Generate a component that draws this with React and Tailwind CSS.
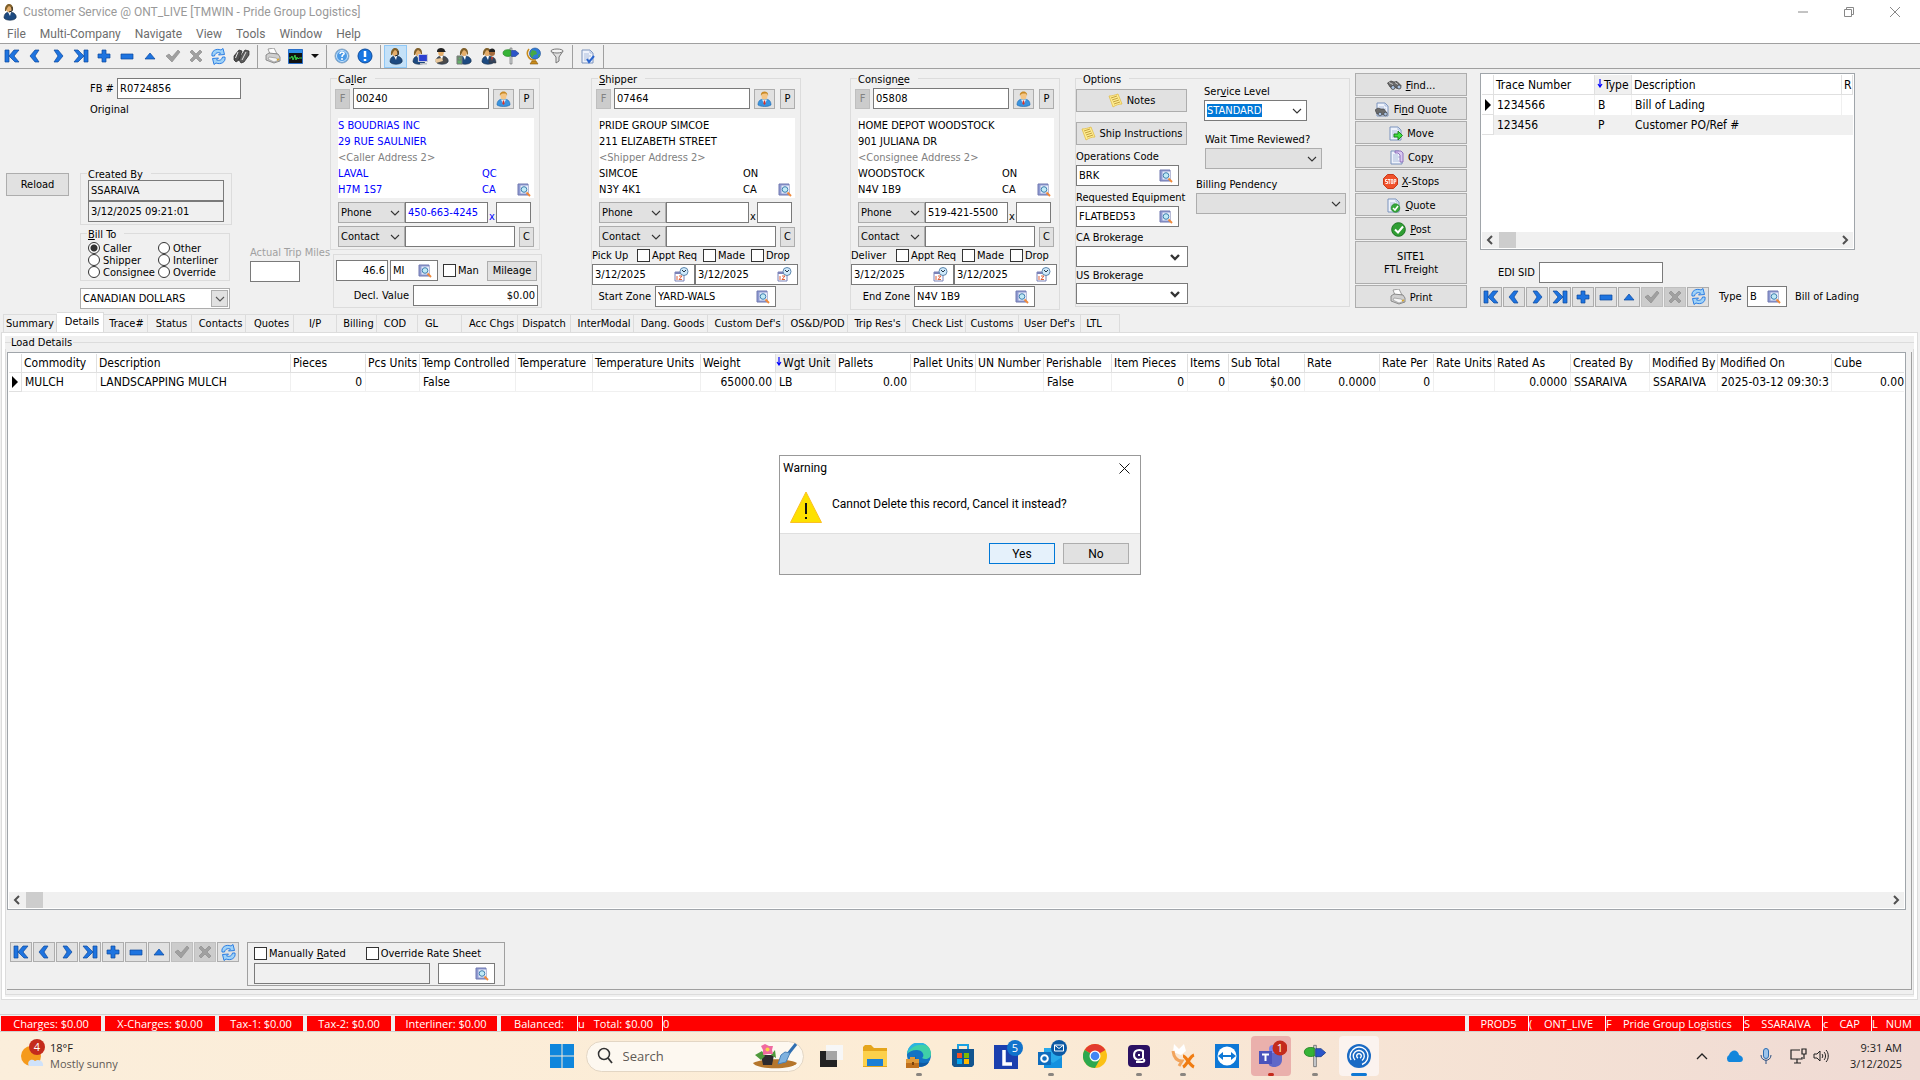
import React, { useState } from "react";

/* ---------- toolbar and record icons ---------- */

const BLUE = "#1e74e0";
const BLUE_EDGE = "#0b479c";

const navShapes = {
  first: "M1 2h4v12H1zM13 2h2L10 8l5 6h-4L5 8l5-6z",
  prev: "M8 2h4L8 8l4 6H8L3 8z",
  next: "M4 2h4l5 6-5 6H4l4-6z",
  last: "M1 2h4l6 6-6 6H1l5-6zM11 2h4v12h-4z",
  plus: "M6 2h4v4h4v4h-4v4H6v-4H2V6h4z",
  minus: "M2 6h12v5H2z",
  up: "M8 5l5 6H3z",
  check: "M1 8l3-2 3 3 6-7 2 2-8 10z",
  cross: "M2 4l2-2 4 4 4-4 2 2-4 4 4 4-2 2-4-4-4 4-2-2 4-4z",
};

function NavIcon({ name }) {
  if (name === "refresh") {
    return (
      <svg width="17" height="17" viewBox="0 0 17 17">
        <path d="M2 8C1 3 6 0 11 2l2-1.500 1.500 6-6 .500L10.500 5C8 4 5 5 4.500 8z" fill="#9fd2f8" stroke={BLUE} strokeWidth=".9" />
        <path d="M15 9c1 5-4 8-9 6l-2 1.500-1.500-6 6-.500L6.500 12c2.500 1 5.500 0 6-3z" fill="#9fd2f8" stroke={BLUE} strokeWidth=".9" />
      </svg>
    );
  }
  const gray = name === "check" || name === "cross";
  return (
    <svg width="16" height="16" viewBox="0 0 16 16">
      <path d={navShapes[name]} fill={gray ? "#a0a0a0" : BLUE} stroke={gray ? "#8e8e8e" : BLUE_EDGE} strokeWidth=".7" />
    </svg>
  );
}

function Person() {
  return (
    <svg width="15" height="17" viewBox="0 0 15 17">
      <path d="M1 15c0-4 2-6 6.500-6S14 11 14 15c-3 2-10 2-13 0z" fill="#3a94e0" stroke="#1c66ad" strokeWidth=".6" />
      <path d="M5 9.500l2.500 5 2.500-5z" fill="#e8f2fb" />
      <path d="M7 10.500h1l.700 3-1.200 1.500-1.200-1.500z" fill="#d8322a" />
      <ellipse cx="7.500" cy="6" rx="3" ry="3.600" fill="#f5c583" />
      <path d="M4 6C2.500 0 12.500 0 11 6c-.5-2-1-2.500-3-2.500S4.500 4 4 6z" fill="#c98a25" />
    </svg>
  );
}

function Agent({ variant }) {
  return (
    <svg width="18" height="18" viewBox="0 0 18 18">
      <path d="M3 15c0-4 2-6 6-6s7 3 6 6c-2 3-10 3-12 0z" fill={variant === "driver" ? "#4a4a4a" : "#1d4a80"} stroke="#152d4a" strokeWidth=".6" />
      <path d="M7 9l2 4 1-4z" fill="#fff" />
      <ellipse cx="8" cy="5.500" rx="2.800" ry="3.500" fill="#e5ae6b" />
      <path
        d={variant === "driver" ? "M4 4c0-4 8-4 8 0l1 1H4z" : "M4 8C3-1 13-1 12 7l-1 1c0-3-1-4-3-5-2 1-2 3-3 5z"}
        fill={variant === "driver" ? "#222" : "#80602a"}
      />
      {variant === "headset" && <path d="M11 4v4l-3 1" stroke="#222" fill="none" />}
      {variant === "computer" && (
        <g>
          <path d="M8.500 7.500h9v7h-9z" fill="#2b3fd0" stroke="#c5c9d8" strokeWidth="1.200" />
          <path d="M10 16h7v1.500h-7z" fill="#b9bcc6" />
        </g>
      )}
      {variant === "driver" && <path d="M2 12l7-1 1 3-7 2z" fill="#e8c79b" />}
      {variant === "phone" && <path d="M1 9h5v8H1zM2 10h3v3H2z" fill="#63b06a" stroke="#777" />}
      {variant === "group" && (
        <g>
          <circle cx="13" cy="6" r="3" fill="#a56b3c" />
          <path d="M10 5c0-5 7-4 6 0z" fill="#222" />
          <path d="M10 16c0-4 1-6 3-6s4 2 4 6z" fill="#33445c" stroke="#333" strokeWidth=".5" />
          <path d="M12 10h2l-1 4z" fill="#d0402e" />
        </g>
      )}
    </svg>
  );
}

function Lookup() {
  return (
    <svg width="14" height="14" viewBox="0 0 14 14" className="shrink-0">
      <path d="M1 1h10v11H1z" fill="#8f9bd2" stroke="#7078b0" />
      <path d="M3.500 2.500H11v8H3.500z" fill="#e7ecfa" />
      <circle cx="7" cy="6.500" r="2.800" fill="#bfeaf5" stroke="#3f7fae" />
      <path d="M9.500 9.500l3.500 3.500" stroke="#ef8a3b" strokeWidth="2" />
    </svg>
  );
}

function CalendarClock() {
  return (
    <svg width="15" height="15" viewBox="0 0 15 15" className="shrink-0">
      <path d="M1 5h9v9H1z" fill="#fff" stroke="#7b82b8" />
      <path d="M1 5h9v2H1z" fill="#7b82b8" />
      <path d="M3 9v4M5 9h3l-3 3.500h3" stroke="#e0603a" fill="none" />
      <circle cx="10" cy="4.500" r="4" fill="#cfe9fa" stroke="#5d86ad" />
      <path d="M8 3l2 2 2-2" stroke="#234" fill="none" />
    </svg>
  );
}

function Note() {
  return (
    <svg width="15" height="15" viewBox="0 0 15 15">
      <path d="M1 3c3 0 6-1 9-2l4 10c-3 0-6 1-9 3z" fill="#fdeb8f" stroke="#e2be4a" strokeWidth=".8" />
      <path d="M3 5l6-2M4 7l6-2M5 9l6-2M6 11l6-2" stroke="#b9922f" strokeWidth=".8" />
    </svg>
  );
}

function Binoculars() {
  return (
    <svg width="15" height="15" viewBox="0 0 15 15">
      <path d="M.500 5L4 3l3 1 3-.500 4 4-1 2.500-3 .500L7.500 9 6 10.500 3 9z" fill="#6a6a6a" stroke="#3a3a3a" strokeWidth=".7" />
      <path d="M2 4.500l4 2M8 4.500l3 2" stroke="#ddd" strokeWidth=".8" />
      <circle cx="6" cy="9.500" r="2" fill="#a9c2e2" stroke="#444" strokeWidth=".8" />
      <circle cx="12" cy="9" r="2" fill="#a9c2e2" stroke="#444" strokeWidth=".8" />
    </svg>
  );
}

function BinocularsTall() {
  return (
    <svg width="17" height="16" viewBox="0 0 17 16">
      <path d="M1 8l5-6 3 1-3 9-3 2-2-2z" fill="#4d4d4d" stroke="#222" strokeWidth=".7" />
      <path d="M8 8l4-6 4 1v4l-5 7-3 1-2-3z" fill="#5e5e5e" stroke="#222" strokeWidth=".7" />
      <path d="M5 4l-2.500 6M13 4l-4 8" stroke="#e4e4e4" />
    </svg>
  );
}

function Doc({ kind }) {
  return (
    <svg width="15" height="15" viewBox="0 0 15 15">
      <path d="M2 1h8l3 3v10H2z" fill="#eef2fb" stroke="#7b93bd" />
      <path d="M10 1v3h3M4 5h5M4 7h7M4 9h5M4 11h6" fill="none" stroke="#9db1d6" strokeWidth=".8" />
      {kind === "move" && <path d="M6 8h4V5l4.500 4.500L10 14v-3H6z" fill="#3fdf3f" stroke="#157a15" strokeWidth=".9" />}
      {kind === "find" && (
        <g>
          <path d="M0 8l3-2 3 1 3 0 3 4-2 2-8-1z" fill="#6a6a6a" stroke="#3a3a3a" strokeWidth=".6" />
          <circle cx="5" cy="12" r="1.800" fill="#a9c2e2" stroke="#444" strokeWidth=".7" />
          <circle cx="10.500" cy="12" r="1.800" fill="#a9c2e2" stroke="#444" strokeWidth=".7" />
        </g>
      )}
      {kind === "copy" && <path d="M6 1h6l2 2v9h-3V5L9 3H6z" fill="#d9c9f0" stroke="#7c5cb0" strokeWidth=".8" />}
      {kind === "quote" && (
        <g>
          <circle cx="9.500" cy="10" r="4.300" fill="#36a83a" stroke="#187a1e" strokeWidth=".6" />
          <path d="M7 10l2 2 3-4" stroke="#fff" strokeWidth="1.500" fill="none" />
        </g>
      )}
      {kind === "tick" && <path d="M7 10l2 3 5-6" stroke="#2b66cf" strokeWidth="2" fill="none" />}
    </svg>
  );
}

function Stop() {
  return (
    <svg width="15" height="15" viewBox="0 0 15 15">
      <path d="M4.500.5h6l4 4v6l-4 4h-6l-4-4v-6z" fill="#f0512a" stroke="#c9391a" />
      <path d="M4.500 5.500H2.500v2h2v2h-2M5 5.500h2.500M6.200 5.500v4.500M8.200 5.500h1.600v4H8.200zM11.200 10V5.500h1.600v2.200h-1.600" stroke="#fff" fill="none" strokeWidth=".9" />
    </svg>
  );
}

function GreenCheck() {
  return (
    <svg width="15" height="15" viewBox="0 0 15 15">
      <circle cx="7.500" cy="7.500" r="6.800" fill="#2f9e33" stroke="#1a7420" />
      <path d="M4 7.500l3 3L12 4.500" stroke="#fff" strokeWidth="2" fill="none" />
    </svg>
  );
}

function Printer() {
  return (
    <svg width="16" height="16" viewBox="0 0 16 16">
      <path d="M3 1l6-1 3 6H5z" fill="#fdfdfd" stroke="#8a8a8a" strokeWidth=".8" />
      <path d="M1 7l3-2 9 1 2 3v4l-6 2-8-3z" fill="#cfcfcf" stroke="#777" strokeWidth=".8" />
      <path d="M4 9l7 1 3 2-5 2-6-3z" fill="#f6f6f6" stroke="#888" strokeWidth=".6" />
      <path d="M12 12l2-1" stroke="#dca92c" strokeWidth="1.500" />
    </svg>
  );
}

function Signpost({ size = 18 }) {
  return (
    <svg width={size} height={size} viewBox="0 0 18 18">
      <path d="M8 1h2v16H8z" fill="#d0d4d8" stroke="#666" strokeWidth=".6" />
      <path d="M8.500 3C5 2 1 3 1 6s4 4 7.500 3z" fill="#36b336" stroke="#1a7a1a" strokeWidth=".6" />
      <path d="M9.500 3.500h4l3.500 3-3.500 3h-4z" fill="#2b55c9" stroke="#173c86" strokeWidth=".6" />
    </svg>
  );
}

function Globe() {
  return (
    <svg width="18" height="18" viewBox="0 0 18 18">
      <path d="M5 17h8l-2-3H7z" fill="#c88a1b" stroke="#85590d" strokeWidth=".6" />
      <path d="M4 2C0 7 4 14 11 13" fill="none" stroke="#c88a1b" strokeWidth="1.500" />
      <circle cx="10" cy="6.500" r="5.500" fill="#2f7bd6" stroke="#1a4c90" strokeWidth=".6" />
      <path d="M7 3l4 1 1 3-3 1-2 3-2-4zM13 8l2-1-1 4z" fill="#46a846" />
    </svg>
  );
}

function Chevron({ bold = false, gray = false }) {
  return (
    <svg width="12" height="8" viewBox="0 0 12 8" className="pointer-events-none shrink-0">
      <path d="M2 2l4 4 4-4" fill="none" stroke={gray ? "#555" : "#333"} strokeWidth={bold ? 2.4 : 1.1} />
    </svg>
  );
}

/* ---------- form controls ---------- */

function Field({ label, id, value = "", className = "", inputClass = "", readOnly, icon, type = "text" }) {
  return (
    <div className={`flex h-[21px] shrink-0 items-center border border-[#7a7a7a] ${readOnly ? "bg-[#f0f0f0]" : "bg-white"} ${className}`}>
      <input
        id={id}
        aria-label={label}
        type={type}
        readOnly={readOnly}
        defaultValue={value}
        className={`h-full w-full min-w-0 flex-1 bg-transparent px-[2px] outline-none ${inputClass}`}
      />
      {icon && <span className="mr-[5px] flex">{icon}</span>}
    </div>
  );
}

function Combo({ label, id, value = "", className = "", tone = "gray", bold, selected }) {
  const tones = {
    gray: "bg-[#e1e1e1] border-[#adadad]",
    white: "bg-white border-[#7a7a7a]",
    currency: "bg-white border-[#adadad]",
  };
  return (
    <div className={`relative flex h-[21px] shrink-0 items-center border ${tones[tone]} ${className}`}>
      <select
        id={id}
        aria-label={label}
        className={`h-[13px] appearance-none outline-none ${selected ? "bg-[#0078d7] text-white" : "w-full bg-transparent px-[2px]"}`}
      >
        <option>{value}</option>
      </select>
      {tone === "currency" ? (
        <span className="pointer-events-none absolute right-px flex h-[17px] w-[17px] items-center justify-center border border-[#adadad] bg-[#e1e1e1]">
          <Chevron gray />
        </span>
      ) : (
        <span className={`pointer-events-none absolute flex ${bold ? "right-[6px]" : "right-[3px]"}`}>
          <Chevron bold={bold} />
        </span>
      )}
    </div>
  );
}

function Check({ children, className = "" }) {
  return (
    <label className={`flex items-center gap-[2px] whitespace-nowrap ${className}`}>
      <input type="checkbox" className="h-[13px] w-[13px] shrink-0 appearance-none border border-[#333] bg-white checked:bg-[#333]" />
      <span>{children}</span>
    </label>
  );
}

function Button({ children, className = "", disabled, ...rest }) {
  return (
    <button
      type="button"
      disabled={disabled}
      className={`flex shrink-0 items-center justify-center border ${
        disabled ? "border-[#bfbfbf] bg-[#cccccc] text-[#838383]" : "border-[#adadad] bg-[#e1e1e1]"
      } ${className}`}
      {...rest}
    >
      {children}
    </button>
  );
}

function Group({ title, children, className = "" }) {
  return (
    <fieldset className={`border border-[#dcdcdc] ${className}`}>
      <legend className="ml-[6px] h-[13px] pr-2 pl-px leading-[15px]">{title}</legend>
      {children}
    </fieldset>
  );
}

const navNames = ["first", "prev", "next", "last", "plus", "minus", "up", "check", "cross", "refresh"];

function Navigator() {
  return (
    <div className="flex shrink-0 gap-px">
      {navNames.map((n) => (
        <Button key={n} aria-label={n} disabled={n === "check" || n === "cross"} className="h-5 w-[22px]">
          <NavIcon name={n} />
        </Button>
      ))}
    </div>
  );
}

/* ---------- header form ---------- */

function Party({ title, name, code, lines, city, region, postal, phone = "", blue, stop }) {
  const ink = blue ? "text-[#0000ff]" : "";
  return (
    <Group title={title} className="w-[210px] pb-[2px]">
      <div className="flex items-center pt-[3px] pl-1">
        <Button disabled aria-label={`${name} filter`} className="h-5 w-[15px]">F</Button>
        <Field label={`${name} code`} value={code} className="ml-[3px] w-[136px]" />
        <Button aria-label={`${name} profile`} className="ml-1 h-5 w-[21px]"><Person /></Button>
        <Button className="ml-[5px] h-5 w-[15px]">P</Button>
      </div>
      <div className={`mt-[9px] ml-[7px] w-[196px] bg-white leading-4 whitespace-nowrap ${ink}`}>
        <p>{lines[0]}</p>
        <p>{lines[1]}</p>
        <p className="text-[#808080]">&lt;{name} Address 2&gt;</p>
        <p className="flex"><span className="w-36">{city}</span><span>{region}</span></p>
        <p className="flex items-center">
          <span className="w-36">{postal}</span>
          <span className="w-[35px]">CA</span>
          <Lookup />
        </p>
      </div>
      <div className="mt-1 ml-[7px] flex">
        <Combo label={`${name} phone type`} value="Phone" className="w-[67px]" />
        <Field label={`${name} phone`} value={phone} className="w-[83px]" inputClass={ink} />
        <label htmlFor={`${name}-ext`} className={`w-2 self-end text-center ${ink}`}>x</label>
        <Field id={`${name}-ext`} label="Extension" className="w-[35px]" />
      </div>
      <div className="mt-[3px] ml-[7px] flex items-center">
        <Combo label={`${name} contact type`} value="Contact" className="w-[67px]" />
        <Field label={`${name} contact`} className="w-[110px]" />
        <Button className="ml-1 h-5 w-[15px]">C</Button>
      </div>
      {stop && (
        <>
          <div className="mt-[2px] flex h-[13px] items-center">
            <span className="w-[45px]">{stop.label}</span>
            <Check className="w-[66px]">Appt Req</Check>
            <Check className="w-12">Made</Check>
            <Check>Drop</Check>
          </div>
          <div className="mt-[2px] flex">
            <Field label={`${stop.label} from`} value="3/12/2025" className="w-[103px]" icon={<CalendarClock />} />
            <Field label={`${stop.label} to`} value="3/12/2025" className="w-[103px]" icon={<CalendarClock />} />
          </div>
          <div className="mt-px flex items-center">
            <label htmlFor={`${name}-zone`} className="w-[63px] pr-1 text-right whitespace-nowrap">{stop.zoneLabel}</label>
            <Field id={`${name}-zone`} label={stop.zoneLabel} value={stop.zone} className="w-[121px]" icon={<Lookup />} />
          </div>
        </>
      )}
    </Group>
  );
}

function BillColumn() {
  const options = ["Caller", "Other", "Shipper", "Interliner", "Consignee", "Override"];
  return (
    <div className="w-[330px] shrink-0 pt-[6px]">
      <div className="flex items-center pl-[90px]">
        <label htmlFor="fb" className="w-[27px]">FB #</label>
        <Field id="fb" label="FB #" value="R0724856" className="w-[124px]" />
      </div>
      <p className="mt-1 pl-[90px]">Original</p>
      <div className="mt-[51px] flex items-start">
        <Button className="mt-[6px] ml-[6px] h-[23px] w-[63px]">Reload</Button>
        <div className="ml-[11px] w-[150px]">
          <Group title="Created By" className="pb-[2px]">
            <div className="px-[7px]">
              <Field label="Created by user" value="SSARAIVA" readOnly className="w-[136px]" />
              <Field label="Created on" value="3/12/2025 09:21:01" readOnly className="w-[136px]" />
            </div>
          </Group>
          <Group title={<><u>B</u>ill To</>} className="mt-[2px] pb-[2px]">
            <div className="grid grid-cols-[70px_70px] pt-[2px] pl-[7px]">
              {options.map((o) => (
                <label key={o} className="flex h-3 items-center gap-[3px] whitespace-nowrap">
                  <input
                    type="radio"
                    name="billto"
                    defaultChecked={o === "Caller"}
                    className="h-3 w-3 shrink-0 appearance-none rounded-full border border-[#333] bg-white checked:bg-[radial-gradient(circle,#333_0_3px,white_4px)]"
                  />
                  {o}
                </label>
              ))}
            </div>
          </Group>
          <Combo label="Currency" value="CANADIAN DOLLARS" tone="currency" className="mt-[7px] w-[150px]" />
        </div>
        <div className="mt-[79px] ml-5 whitespace-nowrap">
          <label htmlFor="trip" className="block text-[#a0a0a0]">Actual Trip Miles</label>
          <Field id="trip" label="Actual Trip Miles" className="mt-[2px] w-[50px]" />
        </div>
      </div>
    </div>
  );
}

function CallerColumn() {
  return (
    <div className="w-[212px] shrink-0">
      <Party
        title={<>Ca<u>l</u>ler</>}
        name="Caller"
        code="00240"
        lines={["S BOUDRIAS INC", "29 RUE SAULNIER"]}
        city="LAVAL"
        region="QC"
        postal="H7M 1S7"
        phone="450-663-4245"
        blue
      />
      <div className="mt-1 ml-[3px] border border-[#dcdcdc] px-[2px] pt-[5px] pb-px">
        <div className="flex items-center">
          <Field label="Miles" value="46.6" className="w-[52px]" inputClass="text-right" />
          <Field label="Distance unit" value="MI" className="ml-[2px] w-12" icon={<Lookup />} />
          <Check className="ml-[5px] w-11">Man</Check>
          <Button className="h-5 w-[50px]">Mileage</Button>
        </div>
        <div className="mt-1 flex items-center">
          <label htmlFor="decl" className="w-[77px] pr-1 text-right">Decl. Value</label>
          <Field id="decl" label="Decl. Value" value="$0.00" className="w-[125px]" inputClass="text-right" />
        </div>
      </div>
    </div>
  );
}

function Options() {
  return (
    <Group title="Options" className="w-[275px] shrink-0 pb-[2px]">
      <div className="flex whitespace-nowrap">
        <div className="w-[120px] pt-1">
          <Button className="h-[23px] w-[111px] gap-1"><Note />Notes</Button>
          <Button className="mt-[10px] h-[23px] w-[111px] gap-1"><Note />Ship Instructions</Button>
          <label htmlFor="ops" className="mt-[5px] block">Operations Code</label>
          <Field id="ops" label="Operations Code" value="BRK" className="mt-[2px] w-[103px]" icon={<Lookup />} />
          <label htmlFor="equip" className="mt-[5px] block">Requested Equipment</label>
          <Field id="equip" label="Requested Equipment" value="FLATBED53" className="mt-[2px] w-[103px]" icon={<Lookup />} />
          <label htmlFor="cabrk" className="mt-1 block">CA Brokerage</label>
          <Combo id="cabrk" label="CA Brokerage" tone="white" bold className="mt-[2px] w-[112px]" />
          <label htmlFor="usbrk" className="mt-[2px] block">US Brokerage</label>
          <Combo id="usbrk" label="US Brokerage" tone="white" bold className="mt-px w-[112px]" />
        </div>
        <div>
          <label htmlFor="svc" className="ml-2 block">Ser<u>v</u>ice Level</label>
          <Combo id="svc" label="Service Level" value="STANDARD" tone="white" selected className="mt-[2px] ml-2 w-[103px] pl-[2px]" />
          <label htmlFor="wait" className="mt-3 ml-[9px] block">Wait Time Reviewed?</label>
          <Combo id="wait" label="Wait Time Reviewed?" className="mt-[2px] ml-[9px] w-[117px]" />
          <label htmlFor="pend" className="mt-[9px] block">Billing Pendency</label>
          <Combo id="pend" label="Billing Pendency" className="mt-[2px] w-[150px]" />
        </div>
      </div>
    </Group>
  );
}

function ActionButtons() {
  const actions = [
    [<Binoculars />, <><u>F</u>ind...</>],
    [<Doc kind="find" />, <>Fi<u>n</u>d Quote</>],
    [<Doc kind="move" />, "Move"],
    [<Doc kind="copy" />, <>Cop<u>y</u></>],
    [<Stop />, <><u>X</u>-Stops</>],
    [<Doc kind="quote" />, <><u>Q</u>uote</>],
    [<GreenCheck />, <><u>P</u>ost</>],
  ];
  return (
    <div className="ml-[5px] flex w-28 shrink-0 flex-col gap-px pt-px">
      {actions.map(([icon, text], i) => (
        <Button key={i} className="h-[23px] gap-1 pt-px">{icon}<span>{text}</span></Button>
      ))}
      <Button className="h-[43px] pt-px">SITE1<br />FTL Freight</Button>
      <Button className="h-[23px] gap-1 pt-px"><Printer />Print</Button>
    </div>
  );
}

function ScrollBar() {
  return (
    <div className="flex h-4 shrink-0 items-center bg-[#f0f0f0]">
      <svg width="17" height="10" viewBox="0 0 17 10"><path d="M10 1L6 5l4 4" fill="none" stroke="#505050" strokeWidth="2" /></svg>
      <span className="h-4 w-[17px] bg-[#cdcdcd]" />
      <span className="flex-1" />
      <svg width="17" height="10" viewBox="0 0 17 10"><path d="M7 1l4 4-4 4" fill="none" stroke="#505050" strokeWidth="2" /></svg>
    </div>
  );
}

function SortArrow() {
  return (
    <svg width="6" height="9" viewBox="0 0 6 9" className="mr-px mb-1 inline-block">
      <path d="M3 0v8M1 5l2 3 2-3" fill="none" stroke="#0000ff" strokeWidth="1.200" />
    </svg>
  );
}

function RowMarker() {
  return (
    <svg width="7" height="12" viewBox="0 0 7 12" className="ml-[3px]"><path d="M0 0l6 6-6 6z" fill="#000" /></svg>
  );
}

function TracePanel() {
  const th = "h-5 border-r border-b border-[#e0e0e0] px-[2px] text-left font-normal";
  const td = "h-5 border-r border-[#f0f0f0] px-[3px]";
  return (
    <div className="ml-[13px] w-[375px] shrink-0 pt-px">
      <div className="flex h-[177px] flex-col border border-[#a0a5aa] bg-white p-px">
        <div className="flex-1 overflow-hidden">
          <table className="w-full table-fixed border-separate border-spacing-0 text-xs whitespace-nowrap">
            <colgroup>
              <col className="w-3" /><col className="w-[101px]" /><col className="w-[37px]" /><col className="w-[210px]" /><col />
            </colgroup>
            <thead>
              <tr>
                <th className={th} />
                <th className={th}>Trace Number</th>
                <th className={`${th} bg-[#f0f0f0]`}><SortArrow />Type</th>
                <th className={th}>Description</th>
                <th className={th}>R</th>
              </tr>
            </thead>
            <tbody>
              <tr>
                <td className="border-r border-b border-[#e0e0e0]"><RowMarker /></td>
                <td className={td}>1234566</td><td className={td}>B</td><td className={td}>Bill of Lading</td><td />
              </tr>
              <tr className="bg-[#f0f0f0]">
                <td className="border-r border-b border-[#e0e0e0] bg-white" />
                <td className={td}>123456</td><td className={td}>P</td><td className={td}>Customer PO/Ref #</td><td />
              </tr>
            </tbody>
          </table>
        </div>
        <ScrollBar />
      </div>
      <div className="mt-3 flex items-center">
        <label htmlFor="edi" className="w-[59px] pl-[18px] whitespace-nowrap">EDI SID</label>
        <Field id="edi" label="EDI SID" className="w-[124px]" />
      </div>
      <div className="mt-[3px] flex items-center whitespace-nowrap">
        <Navigator />
        <label htmlFor="ttype" className="ml-[10px] w-7 shrink-0">Type</label>
        <Field id="ttype" label="Type" value="B" className="w-10" icon={<Lookup />} />
        <span className="ml-2">Bill of Lading</span>
      </div>
    </div>
  );
}

/* ---------- window chrome ---------- */

function Sep() {
  return <span className="mr-[3px] ml-1 h-[23px] w-px shrink-0 bg-[#a0a0a0]" />;
}

function ToolButton({ label, children, active }) {
  return (
    <button type="button" aria-label={label} className={`flex h-[23px] w-[23px] shrink-0 items-center justify-center ${active ? "border border-[#90c8f6] bg-[#c4e1f8]" : ""}`}>
      {children}
    </button>
  );
}

function TitleBar() {
  const menus = ["File", "Multi-Company", "Navigate", "View", "Tools", "Window", "Help"];
  return (
    <header className="bg-white font-[Roboto,'Noto_Sans',sans-serif] text-xs">
      <div className="flex h-6 items-center pl-px text-[#999999]">
        <Agent variant="headset" />
        <h1 className="ml-1 flex-1">Customer Service @ ONT_LIVE [TMWIN - Pride Group Logistics]</h1>
        <button type="button" aria-label="Minimize" className="flex w-[46px] justify-center"><svg width="10" height="10"><path d="M0 5h10" stroke="#888" /></svg></button>
        <button type="button" aria-label="Restore" className="flex w-[46px] justify-center"><svg width="10" height="10"><path d="M.5 2.500h7v7h-7zM2.500 2.500v-2h7v7h-2" stroke="#888" fill="none" /></svg></button>
        <button type="button" aria-label="Close" className="mr-[2px] flex w-[46px] justify-center"><svg width="10" height="10"><path d="M0 0l10 10M10 0L0 10" stroke="#888" /></svg></button>
      </div>
      <nav className="flex h-[19px] items-center gap-[14px] pl-[7px] text-[#6d6d6d]">
        {menus.map((m) => <button type="button" key={m}>{m}</button>)}
      </nav>
    </header>
  );
}

function Toolbar() {
  return (
    <div className="flex h-[26px] items-center border-t border-b border-[#a0a0a0]">
      {navNames.map((n) => <ToolButton key={n} label={n}><NavIcon name={n} /></ToolButton>)}
      <ToolButton label="Find"><BinocularsTall /></ToolButton>
      <Sep />
      <ToolButton label="Print"><Printer /></ToolButton>
      <ToolButton label="Monitor">
        <svg width="15" height="15" viewBox="0 0 15 15">
          <path d="M.5.500h14v14H.5z" fill="#111" stroke="#2a6fc9" />
          <path d="M1 1h13v3H1z" fill="#2f8fe8" />
          <path d="M1 9h2l1-2 1 4 2-5 1 5 1-3 1 2 1-1h3" fill="none" stroke="#35d04a" />
        </svg>
      </ToolButton>
      <svg width="15" height="8" viewBox="0 0 15 8"><path d="M4 2h8L8 6z" fill="#111" /></svg>
      <Sep />
      <ToolButton label="Help">
        <svg width="16" height="16" viewBox="0 0 16 16">
          <circle cx="8" cy="8" r="7" fill="#4b9ae6" stroke="#8fa8c0" />
          <circle cx="8" cy="8" r="5.500" fill="none" stroke="#cfe6fa" />
          <path d="M6 6c0-3 5-2 4 0-1 1-2 1-2 3M8 10v2" fill="none" stroke="#fff" strokeWidth="1.500" />
        </svg>
      </ToolButton>
      <ToolButton label="Alert">
        <svg width="16" height="16" viewBox="0 0 16 16">
          <circle cx="8" cy="8" r="7" fill="#1876e2" stroke="#0c4b9c" />
          <path d="M8 3v6M8 11v2" stroke="#fff" strokeWidth="2.500" />
        </svg>
      </ToolButton>
      <Sep />
      <ToolButton label="Customer service" active><Agent variant="headset" /></ToolButton>
      <ToolButton label="Dispatch"><Agent variant="computer" /></ToolButton>
      <ToolButton label="Drivers"><Agent variant="driver" /></ToolButton>
      <ToolButton label="Calls"><Agent variant="phone" /></ToolButton>
      <ToolButton label="Clients"><Agent variant="group" /></ToolButton>
      <ToolButton label="Routes"><Signpost /></ToolButton>
      <ToolButton label="Map"><Globe /></ToolButton>
      <ToolButton label="Filter">
        <svg width="16" height="16" viewBox="0 0 16 16">
          <path d="M2 3l5 6v6l3-2V9l4-6z" fill="#e0e0e0" stroke="#777" />
          <ellipse cx="8" cy="3" rx="6" ry="2" fill="#f4f4f4" stroke="#777" />
        </svg>
      </ToolButton>
      <Sep />
      <ToolButton label="Report"><Doc kind="tick" /></ToolButton>
      <Sep />
    </div>
  );
}

/* ---------- details tab ---------- */

const tabs = [
  ["Summary", "w-[54px]"], ["Details", "w-[47px] pl-1"], ["Trace#", "w-[44px] pl-[2px]"], ["Status", "w-[44px] pl-1"],
  ["Contacts", "w-[54px] pl-1"], ["Quotes", "w-[48px] pl-1"], ["I/P", "w-[43px]"], ["Billing", "w-[40px] pl-1"],
  ["COD", "w-[41px] pr-1"], ["GL", "w-[44px] pr-4"], ["Acc Chgs", "w-[56px] pl-1"], ["Dispatch", "w-[53px]"],
  ["InterModal", "w-[63px] pl-1"], ["Dang. Goods", "w-[74px] pl-1"], ["Custom Def's", "w-[76px] pl-1"],
  ["OS&D/POD", "w-[64px] pl-1"], ["Trip Res's", "w-[58px] pl-[2px]"], ["Check List", "w-[60px] pl-1"],
  ["Customs", "w-[53px]"], ["User Def's", "w-[62px]"], ["LTL", "w-[39px] pr-3"],
];

function TabStrip() {
  const [active, setActive] = useState("Details");
  return (
    <div role="tablist" className="flex h-5 shrink-0 items-end pl-[3px] whitespace-nowrap">
      {tabs.map(([name, width]) => (
        <button
          key={name}
          type="button"
          role="tab"
          aria-selected={active === name}
          onClick={() => setActive(name)}
          className={`flex shrink-0 justify-center border-t border-r border-[#dcdcdc] pt-[2px] first:border-l ${width} ${
            active === name ? "h-5 bg-white" : "h-[18px]"
          }`}
        >
          {name}
        </button>
      ))}
    </div>
  );
}

const columns = [
  ["Commodity", "w-[75px]", "MULCH"],
  ["Description", "w-[194px]", "LANDSCAPPING MULCH"],
  ["Pieces", "w-[75px]", "0", "right"],
  ["Pcs Units", "w-[54px]", ""],
  ["Temp Controlled", "w-[96px]", "False"],
  ["Temperature", "w-[77px]", ""],
  ["Temperature Units", "w-[108px]", ""],
  ["Weight", "w-[75px]", "65000.00", "right"],
  ["Wgt Unit", "w-[60px]", "LB"],
  ["Pallets", "w-[75px]", "0.00", "right"],
  ["Pallet Units", "w-[65px]", ""],
  ["UN Number", "w-[68px]", ""],
  ["Perishable", "w-[68px]", "False"],
  ["Item Pieces", "w-[76px]", "0", "right"],
  ["Items", "w-[41px]", "0", "right"],
  ["Sub Total", "w-[76px]", "$0.00", "right"],
  ["Rate", "w-[75px]", "0.0000", "right"],
  ["Rate Per", "w-[54px]", "0", "right"],
  ["Rate Units", "w-[61px]", ""],
  ["Rated As", "w-[76px]", "0.0000", "right"],
  ["Created By", "w-[79px]", "SSARAIVA"],
  ["Modified By", "w-[68px]", "SSARAIVA"],
  ["Modified On", "w-[114px]", "2025-03-12 09:30:3"],
  ["Cube", "w-[76px]", "0.00", "right"],
];

function LoadGrid() {
  return (
    <div className="mr-[5px] flex flex-1 flex-col border border-[#a0a5aa] bg-white p-px">
      <div className="flex-1 overflow-hidden">
        <table className="w-full table-fixed border-separate border-spacing-0 text-xs whitespace-nowrap">
          <colgroup>
            <col className="w-[13px]" />
            {columns.map(([name, width]) => <col key={name} className={width} />)}
          </colgroup>
          <thead>
            <tr>
              <th className="h-[19px] border-r border-b border-[#e0e0e0]" />
              {columns.map(([name]) => (
                <th key={name} className={`border-r border-b border-[#e0e0e0] text-left font-normal ${name === "Wgt Unit" ? "bg-[#f0f0f0]" : "pl-[2px]"}`}>
                  {name === "Wgt Unit" && <SortArrow />}
                  {name}
                </th>
              ))}
            </tr>
          </thead>
          <tbody>
            <tr>
              <td className="h-[19px] border-r border-b border-[#e0e0e0]"><RowMarker /></td>
              {columns.map(([name, , value, align]) => (
                <td key={name} className={`border-r border-b border-[#f0f0f0] px-[3px] ${align === "right" ? "text-right" : ""}`}>{value}</td>
              ))}
            </tr>
          </tbody>
        </table>
      </div>
      <ScrollBar />
    </div>
  );
}

function DetailsPanel() {
  return (
    <main className="mr-[2px] ml-px flex flex-1 flex-col border border-[#dcdcdc] bg-white px-[3px] pt-[3px] pb-[2px]">
      <div className="flex flex-1 flex-col bg-[#f0f0f0] pb-[2px]">
        <div className="flex h-[13px] shrink-0 items-center">
          <span className="h-px w-[6px] bg-[#dcdcdc]" />
          <h2 className="leading-[15px]">Load Details</h2>
          <span className="ml-px h-px flex-1 bg-[#dcdcdc]" />
        </div>
        <div className="flex flex-1 flex-col border-r border-b border-l border-[#dcdcdc] pt-[3px] pr-px pb-1 pl-px">
          <div className="flex flex-1 flex-col border-r border-b border-[#a0a0a0]">
            <LoadGrid />
            <div className="flex h-[79px] shrink-0 items-start pt-8 pl-[3px]">
              <Navigator />
              <div className="ml-2 border border-[#a0a0a0] px-[6px] pt-1 pb-px">
                <div className="flex">
                  <Check className="mr-5">Manually <u>R</u>ated</Check>
                  <Check>Override Rate Sheet</Check>
                </div>
                <div className="mt-[3px] flex">
                  <Field label="Rate sheet name" readOnly className="w-[176px]" />
                  <Field label="Rate sheet" className="mr-[3px] ml-2 w-[57px]" icon={<Lookup />} />
                </div>
              </div>
            </div>
          </div>
        </div>
      </div>
    </main>
  );
}

function WarningDialog() {
  return (
    <div role="dialog" aria-labelledby="warn-title" className="absolute top-[455px] left-1/2 w-[362px] -translate-x-1/2 border border-[#999] bg-white font-[Roboto,'Noto_Sans',sans-serif] text-xs leading-4">
      <div className="flex h-6 items-center justify-between pr-[10px] pl-[3px]">
        <h2 id="warn-title">Warning</h2>
        <button type="button" aria-label="Close dialog">
          <svg width="11" height="11"><path d="M.5.500l10 10M10.500.500l-10 10" stroke="#111" /></svg>
        </button>
      </div>
      <div className="flex h-[53px] pt-[11px] pl-[10px]">
        <svg width="32" height="32" viewBox="0 0 32 32">
          <path d="M16 1l15.500 30.500H.5z" fill="#fde100" stroke="#fbbf24" />
          <path d="M16 12v11M16 26v2" stroke="#111" strokeWidth="2" />
        </svg>
        <p className="mt-[5px] ml-[10px]">Cannot Delete this record, Cancel it instead?</p>
      </div>
      <div className="flex h-[41px] items-start justify-end gap-2 border-t border-[#dfdfdf] bg-[#f0f0f0] pt-[9px] pr-[11px]">
        <button type="button" className="h-[21px] w-[66px] border border-[#0078d7] bg-[#e5f1fb]">Yes</button>
        <button type="button" className="h-[21px] w-[66px] border border-[#adadad] bg-[#e1e1e1]">No</button>
      </div>
    </div>
  );
}

/* ---------- bottom bars ---------- */

function StatusCell({ width, mark, children }) {
  return (
    <span className={`flex h-full shrink-0 bg-[#ff0000] ${mark ? "border-l border-white" : ""} ${width}`}>
      {mark && <span>{mark}</span>}
      <span className="flex-1 text-center">{children}</span>
    </span>
  );
}

function StatusBar() {
  return (
    <div className="flex h-[18px] shrink-0 gap-1 border-t border-b border-[#d0d0d0] pt-px pl-px font-['Open_Sans','Noto_Sans',sans-serif] text-[11px] leading-[15px] whitespace-nowrap text-white">
      <StatusCell width="w-[100px]">Charges: $0.00</StatusCell>
      <StatusCell width="w-[110px]">X-Charges: $0.00</StatusCell>
      <StatusCell width="w-[84px]">Tax-1: $0.00</StatusCell>
      <StatusCell width="w-[84px]">Tax-2: $0.00</StatusCell>
      <StatusCell width="w-[102px]">Interliner: $0.00</StatusCell>
      <div className="flex h-full flex-1 bg-[#ff0000]">
        <StatusCell width="w-[76px]">Balanced:</StatusCell>
        <StatusCell width="w-[85px]" mark="u">Total: $0.00</StatusCell>
        <StatusCell width="w-[10px]" mark="0" />
      </div>
      <div className="flex h-full">
        <StatusCell width="w-[59px]">PROD5</StatusCell>
        <StatusCell width="w-[77px]" mark="(">ONT_LIVE</StatusCell>
        <StatusCell width="w-[138px]" mark="F">Pride Group Logistics</StatusCell>
        <StatusCell width="w-[79px]" mark="S">SSARAIVA</StatusCell>
        <StatusCell width="w-[49px]" mark="c">CAP</StatusCell>
        <StatusCell width="w-[49px]" mark="L">NUM</StatusCell>
      </div>
    </div>
  );
}

function TaskIcon({ label, children, running, className = "" }) {
  return (
    <button type="button" aria-label={label} className={`relative flex h-10 w-10 shrink-0 items-center justify-center rounded ${className}`}>
      {children}
      {running && <span className={`absolute bottom-0 h-[3px] rounded-full ${running}`} />}
    </button>
  );
}

function Taskbar() {
  const dot = "w-[6px] bg-[#8a8580]";
  return (
    <footer className="flex h-12 shrink-0 items-center bg-linear-to-r from-[#fbeedb] via-[#fcecd5] to-[#efdad4] font-['Open_Sans','Noto_Sans',sans-serif] text-[11px] leading-4 text-[#1b1b1b]">
      <div className="flex flex-1 items-center gap-1 pl-[18px]">
        <svg width="28" height="36" viewBox="0 0 28 36">
          <circle cx="13" cy="18" r="10" fill="#f59a1c" />
          <path d="M11 28c-3-5 3-8 6-5 4-3 9 1 8 5z" fill="#cfe2fa" />
          <circle cx="19" cy="9" r="8" fill="#c42b1c" />
          <text x="19" y="13" fontSize="11" fill="#fff" textAnchor="middle">4</text>
        </svg>
        <p>18°F<br /><span className="text-[#5f5a55]">Mostly sunny</span></p>
      </div>
      <div className="flex items-center gap-1">
        <TaskIcon label="Start">
          <svg width="24" height="24" viewBox="0 0 24 24">
            <path d="M0 0h11.500v11.500H0zM12.500 0H24v11.500H12.500zM0 12.500h11.500V24H0zM12.500 12.500H24V24H12.500z" fill="#0f86dc" />
          </svg>
        </TaskIcon>
        <label className="flex h-[31px] w-[218px] items-center rounded-full border border-[#e3d6c4] bg-[#fdf8f0] pr-1 pl-[10px]">
          <svg width="16" height="18" viewBox="0 0 16 18" className="shrink-0"><circle cx="7" cy="7" r="5.500" fill="none" stroke="#333" strokeWidth="1.500" /><path d="M11 11l4 5" stroke="#333" strokeWidth="1.800" /></svg>
          <input type="search" placeholder="Search" className="ml-[10px] w-full min-w-0 bg-transparent text-[13px] outline-none placeholder:text-[#5f5a55]" />
          <svg width="48" height="26" viewBox="0 0 48 26" className="shrink-0">
            <path d="M2 20c10-5 34-5 44 0-4 7-40 7-44 0z" fill="#b5762c" />
            <path d="M10 12h13l-2 10H12z" fill="#2d2a2e" />
            <path d="M4 12l7-4 3 5-4 4zM20 12l4-5 1 8z" fill="#4f9a3c" />
            <path d="M14 1l4 2 4 0-1 4 1 4-5 0-5 1 0-5-2-4z" fill="#f06aa0" />
            <circle cx="16.500" cy="6.500" r="2" fill="#f8d34a" />
            <path d="M45 1l-8 10" stroke="#2f6fb2" strokeWidth="3" />
            <path d="M39 10l-4 9-8 2 3-9 4-3z" fill="#7fb2df" stroke="#4a82b8" />
          </svg>
        </label>
        <TaskIcon label="Task view" className="ml-[3px]">
          <svg width="24" height="22" viewBox="0 0 24 22"><path d="M7 0h17v15H7z" fill="#f7f7f7" /><path d="M1 6h17v16H1z" fill="#222" /><path d="M7 6h11v9H7z" fill="#a5a5a5" /></svg>
        </TaskIcon>
        <TaskIcon label="File Explorer">
          <svg width="24" height="22" viewBox="0 0 24 22"><path d="M0 2l2-2h6l3 3h13v19H0z" fill="#e5a51c" /><path d="M0 6h24v15H0z" fill="#fcd04b" /><path d="M4 14h16v7H4z" fill="#1b7fd6" /></svg>
        </TaskIcon>
        <TaskIcon label="Edge" running={dot}>
          <svg width="26" height="26" viewBox="0 0 26 26">
            <circle cx="13" cy="12" r="12" fill="#1273c4" />
            <path d="M1 11C3-4 25-3 25 11c0 5-6 6-9 4 3-2 1-8-5-8-5 0-8 2-10 4z" fill="#3fd0a8" />
            <path d="M1 11C3-4 18-2 21 3 14 0 5 3 1 11z" fill="#2bb5e0" />
            <path d="M10 12c-2 6 4 10 13 7-3 6-14 7-15-2z" fill="#0c59a4" />
            <path d="M0 16h13v9H0z" fill="#c0701c" />
            <path d="M0 16h13v4H0zM4 14h5v2H4z" fill="#e09a3a" />
            <path d="M6 19h2v3H6z" fill="#7a430c" />
          </svg>
        </TaskIcon>
        <TaskIcon label="Store">
          <svg width="24" height="24" viewBox="0 0 24 24"><path d="M7 5V1h10v4" fill="none" stroke="#1ba1e2" strokeWidth="2" /><path d="M1 5h22v16l-2 2H3l-2-2z" fill="#12558f" /><path d="M6 9h5v5H6z" fill="#f25022" /><path d="M13 9h5v5h-5z" fill="#7fba00" /><path d="M6 15h5v5H6z" fill="#00a4ef" /><path d="M13 15h5v5h-5z" fill="#ffb900" /></svg>
        </TaskIcon>
        <TaskIcon label="L app">
          <svg width="32" height="32" viewBox="0 0 32 32"><path d="M3 5h24v24H3z" fill="#1b3fae" /><path d="M13 10v14h8" fill="none" stroke="#fff" strokeWidth="3.500" /><circle cx="24" cy="8" r="8" fill="#1173cc" /><text x="24" y="12" fontSize="11" fill="#fff" textAnchor="middle">5</text></svg>
        </TaskIcon>
        <TaskIcon label="Outlook" running={dot}>
          <svg width="32" height="32" viewBox="0 0 32 32"><path d="M9 8h18v20H9z" fill="#28a8ea" /><path d="M9 17l9 6 9-6v11H9z" fill="#1490df" /><path d="M3 12h13v13H3z" fill="#0f6cbd" /><circle cx="9.500" cy="18.500" r="3.300" fill="none" stroke="#fff" strokeWidth="2" /><circle cx="24" cy="8" r="8" fill="#0c59a4" /><path d="M19.500 5h9v6h-9zl4.500 3.500L28.500 5" fill="none" stroke="#fff" /></svg>
        </TaskIcon>
        <TaskIcon label="Chrome">
          <svg width="24" height="24" viewBox="0 0 24 24"><circle cx="12" cy="12" r="12" fill="#fbc116" /><path d="M12 12L1.600 6A12 12 0 0 1 22.400 6z" fill="#e33b2e" /><path d="M1.600 6A12 12 0 0 0 12 24l5-9z" fill="#2da94f" /><circle cx="12" cy="12" r="5.500" fill="#fff" /><circle cx="12" cy="12" r="4.300" fill="#4285f4" /></svg>
        </TaskIcon>
        <TaskIcon label="Q app" running={dot}>
          <svg width="22" height="22" viewBox="0 0 22 22"><rect width="22" height="22" rx="4" fill="#2b1163" /><path d="M15 13V6c-4-2-9-1-9 4s5 6 9 3M8 17h6c3 0 3-2 1-3M10 10h2" fill="none" stroke="#fff" strokeWidth="2" /></svg>
        </TaskIcon>
        <TaskIcon label="X app" running={dot}>
          <svg width="26" height="26" viewBox="0 0 26 26"><path d="M4 1l5 5 5-5 2 7-5 4-8-3z" fill="#fff" /><path d="M3 8c1 8 5 10 9 10l-3 5" fill="none" stroke="#f2a45c" strokeWidth="3" /><path d="M13 13c3 0 6 9 11 11M24 12c-4 1-7 10-11 12" fill="none" stroke="#f07c12" strokeWidth="3.200" /></svg>
        </TaskIcon>
        <TaskIcon label="TeamViewer">
          <svg width="24" height="24" viewBox="0 0 24 24"><path d="M0 0h24v24H0z" fill="#0e78d6" /><circle cx="12" cy="12" r="9.500" fill="#fff" /><path d="M3 12l5-4v3h8V8l5 4-5 4v-3H8v3z" fill="#0e78d6" /></svg>
        </TaskIcon>
        <TaskIcon label="Teams" className="bg-[#eab0ac]" running="w-[6px] bg-[#c42b1c]">
          <svg width="32" height="32" viewBox="0 0 32 32"><circle cx="18" cy="9" r="4" fill="#7b83eb" /><path d="M12 13h15v7c0 8-13 10-14 2z" fill="#6068c8" /><path d="M4 11h13v13H4z" fill="#4b53bc" /><path d="M7 14.500h7M10.500 14.500V21" stroke="#fff" strokeWidth="2" /><circle cx="25" cy="8" r="7.500" fill="#c42b1c" /><text x="25" y="12" fontSize="11" fill="#fff" textAnchor="middle">1</text></svg>
        </TaskIcon>
        <TaskIcon label="TruckMate" running={dot}><Signpost size={24} /></TaskIcon>
        <TaskIcon label="Citrix Workspace" className="bg-[#fbf3ef]" running="w-4 bg-[#0f78d4]">
          <svg width="24" height="24" viewBox="0 0 24 24">
            <circle cx="12" cy="12" r="12" fill="#1a6ac4" />
            <path d="M4 16a9 9 0 1 1 11 4.500M8 16a5.500 5.500 0 1 1 7 .500M11 14a2.300 2.300 0 1 1 2 0" fill="none" stroke="#fff" strokeWidth="1.400" />
          </svg>
        </TaskIcon>
      </div>
      <div className="flex flex-1 items-center justify-end pr-[18px]">
        <svg width="12" height="8" viewBox="0 0 12 8"><path d="M1 7l5-5 5 5" fill="none" stroke="#222" strokeWidth="1.300" /></svg>
        <svg width="18" height="12" viewBox="0 0 18 12" className="ml-[17px]"><path d="M4 12a4 4 0 0 1 0-7c2-6 9-6 10 0 5 1 5 7 1 7z" fill="#1286dc" /></svg>
        <svg width="12" height="16" viewBox="0 0 12 16" className="ml-[17px]"><rect x="3.500" y=".5" width="5" height="10" rx="2.500" fill="#9cc4ec" stroke="#2b6cb0" /><path d="M1 7c0 7 10 7 10 0M6 12v4" fill="none" stroke="#2b4f80" /></svg>
        <svg width="18" height="16" viewBox="0 0 18 16" className="ml-[18px]"><path d="M10 2H1v9h11V9M4 15h7M7 11v4M12 1h4v5h-4zM14 6v5" fill="none" stroke="#222" strokeWidth="1.200" /></svg>
        <svg width="16" height="16" viewBox="0 0 16 16" className="ml-[5px]"><path d="M1 6h3l3-3v10l-3-3H1zM9 6c1 1 1 3 0 4M11 4c2 2 2 6 0 8M13 2c3 3 3 9 0 12" fill="none" stroke="#222" /></svg>
        <p className="ml-[21px] text-right whitespace-nowrap">9:31 AM<br />3/12/2025</p>
      </div>
    </footer>
  );
}

export default function App() {
  return (
    <div className="relative flex min-h-screen flex-col overflow-hidden bg-[#f0f0f0] font-['DejaVu_Sans_Condensed','Noto_Sans',sans-serif] text-[11px] leading-[13px] text-black">
      <TitleBar />
      <Toolbar />
      <section className="flex items-start pt-[3px] pb-[2px]">
        <BillColumn />
        <CallerColumn />
        <div className="ml-[49px] shrink-0">
          <Party
            title={<><u>S</u>hipper</>}
            name="Shipper"
            code="07464"
            lines={["PRIDE GROUP SIMCOE", "211 ELIZABETH STREET"]}
            city="SIMCOE"
            region="ON"
            postal="N3Y 4K1"
            stop={{ label: "Pick Up", zoneLabel: "Start Zone", zone: "YARD-WALS" }}
          />
        </div>
        <div className="mr-[15px] ml-[49px] shrink-0">
          <Party
            title={<>Consign<u>e</u>e</>}
            name="Consignee"
            code="05808"
            lines={["HOME DEPOT WOODSTOCK", "901 JULIANA DR"]}
            city="WOODSTOCK"
            region="ON"
            postal="N4V 1B9"
            phone="519-421-5500"
            stop={{ label: "Deliver", zoneLabel: "End Zone", zone: "N4V 1B9" }}
          />
        </div>
        <Options />
        <ActionButtons />
        <TracePanel />
      </section>
      <TabStrip />
      <DetailsPanel />
      <div className="h-[14px] shrink-0" />
      <StatusBar />
      <Taskbar />
      <WarningDialog />
    </div>
  );
}
